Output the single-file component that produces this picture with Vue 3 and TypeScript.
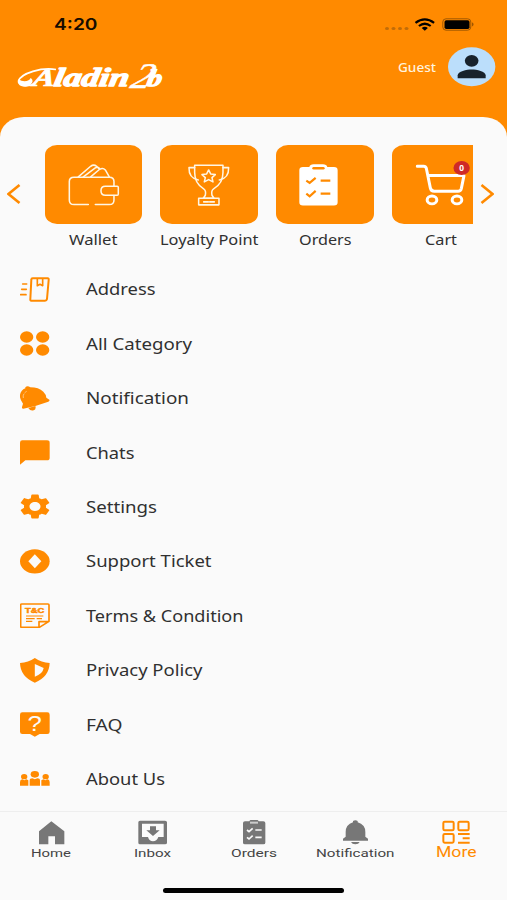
<script setup lang="ts">
import { h } from 'vue'

interface Label { text: string; x: number; w: number }
interface NavItem { text: string; w: number; active?: boolean }

interface StretchProps {
  text: string
  w: number
  size: number
  height: number
  base: number
  family?: string
  weight?: number
}

// Text set to an exact measure, for the wide look of the app's typeface.
const WideText = (p: StretchProps) =>
  h('svg', { width: p.w, height: p.height, style: { display: 'block', overflow: 'visible', flex: 'none' } }, [
    h('text', {
      x: 0, y: p.base, textLength: p.w, lengthAdjust: 'spacingAndGlyphs',
      'font-size': p.size, 'font-weight': p.weight ?? 400,
      'font-family': p.family ?? '"Noto Sans", sans-serif', fill: 'currentColor',
    }, p.text),
  ])
WideText.props = ['text', 'w', 'size', 'height', 'base', 'family', 'weight']

const cards: { text: string; w: number }[] = [
  { text: 'Wallet', w: 48.5 },
  { text: 'Loyalty Point', w: 98.5 },
  { text: 'Orders', w: 52.5 },
  { text: 'Cart', w: 32 },
]

const rows: Label[] = [
  { text: 'Address', x: 0, w: 69.5 },
  { text: 'All Category', x: 0, w: 106 },
  { text: 'Notification', x: -0.5, w: 103 },
  { text: 'Chats', x: 0, w: 48.5 },
  { text: 'Settings', x: 0, w: 71 },
  { text: 'Support Ticket', x: 0, w: 125.5 },
  { text: 'Terms & Condition', x: 0, w: 157.5 },
  { text: 'Privacy Policy', x: -0.5, w: 116.5 },
  { text: 'FAQ', x: -0.5, w: 36.5 },
  { text: 'About Us', x: 0, w: 79 },
]

const nav: NavItem[] = [
  { text: 'Home', w: 40 },
  { text: 'Inbox', w: 37 },
  { text: 'Orders', w: 46 },
  { text: 'Notification', w: 78.5 },
  { text: 'More', w: 40.5, active: true },
]
</script>

<template>
  <div class="app">
    <header class="header">
      <div class="status">
        <WideText text="4:20" :w="43.5" :size="16" :height="20" :base="16.4" family="Inter, sans-serif" :weight="600" />
        <svg class="signals" width="92" height="16" viewBox="0 0 92 16">
          <g fill="#c06c08">
            <ellipse cx="3" cy="12.6" rx="2" ry="1.5" /><ellipse cx="9.5" cy="12.6" rx="2" ry="1.5" />
            <ellipse cx="16" cy="12.6" rx="2" ry="1.5" /><ellipse cx="22.5" cy="12.6" rx="2" ry="1.5" />
          </g>
          <g fill="none" stroke="#000" stroke-width="2.2">
            <path d="M31.500 6.800Q40.800 -.2 50.100 6.800" />
            <path d="M34.900 10Q40.800 5.500 46.700 10" />
          </g>
          <path d="M37.700 11.900Q40.800 9.400 43.900 11.900L40.800 14.700Z" />
          <rect x="58.800" y="2.800" width="28" height="11.400" rx="3.200" fill="none" stroke="#a05800" stroke-width="1" />
          <rect x="60.500" y="4.200" width="25" height="8.800" rx="1.800" />
          <path d="M88.200 6.300q2.600 2.100 0 4.200Z" fill="#8a4b00" />
        </svg>
      </div>
      <div class="brand">
        <svg class="logo" width="150" height="30" viewBox="16 61 150 30" role="img" aria-label="Aladin2b">
          <g fill="#fff" stroke="#fff" stroke-linejoin="round" font-family="'Liberation Serif', serif" font-style="italic" font-weight="700">
            <g transform="translate(0 86) skewX(-10)">
              <text x="32" y="0" font-size="25" stroke-width=".7" textLength="22" lengthAdjust="spacingAndGlyphs">A</text>
              <text x="53" y="0" font-size="26" stroke-width="1.300" textLength="75" lengthAdjust="spacingAndGlyphs">ladin</text>
              <text x="146" y="0" font-size="24" stroke-width="1.200" textLength="15" lengthAdjust="spacingAndGlyphs">b</text>
            </g>
            <g transform="translate(0 87.500) skewX(-22)">
              <text x="129" y="0" font-size="36" font-weight="400" stroke-width=".5" textLength="20" lengthAdjust="spacingAndGlyphs">2</text>
            </g>
          </g>
          <path d="M56 69.500C42 67 21 73 18.500 81C17.500 87.500 31 87 36 82" fill="none" stroke="#fff" stroke-width="1.700" />
          <path d="M18.600 79C23 83 30 81 30.500 78C34 80 33 84 28 86C21 87.500 17.500 84 18.600 79Z" fill="#fff" />
        </svg>
        <div class="user">
          <WideText text="Guest" :w="38" :size="12.4" :height="16" :base="12.600" :weight="500" />
          <svg width="48" height="40" viewBox="0 0 144 120">
            <ellipse cx="71" cy="59" rx="71" ry="58.500" fill="#bbdefb" />
            <ellipse cx="71" cy="41.500" rx="20.500" ry="17.500" fill="#18222b" />
            <path d="M29 94V85C29 73 56 67.500 71 67.500S113 73 113 85V94Z" fill="#18222b" />
          </svg>
        </div>
      </div>
    </header>

    <main class="sheet">
      <section class="carousel">
        <svg class="arrow left" width="14" height="22" viewBox="0 0 14 22"><path d="M12.500 2L1.500 11L12.500 20" /></svg>
        <div class="viewport">
          <div v-for="(c, i) in cards" :key="c.text" class="item">
            <div class="card">
              <svg v-if="i === 0" class="line" viewBox="133 28 292 239" preserveAspectRatio="none">
                <path d="M263 207H220Q206 207 206 193V138Q206 125 220 125H326Q340 125 340 138V152M340 180V193Q340 207 326 207H284" />
                <path d="M314 152H350Q353 152 353 156V175Q353 179 350 179H314Q301 179 301 165.500T314 152Z" />
                <path d="M233 124L270 92Q279 85 288 92L295 99M248 124L284 97Q291 92 296 98M270 124L297 101Q307 95 314 103L326 124" />
              </svg>
              <svg v-else-if="i === 1" class="line" viewBox="481 28 292 239" preserveAspectRatio="none">
                <path d="M585 89H670V111Q670 144 642 160Q634 165 637 179L643 188H611L617 179Q620 165 612 160Q585 144 585 111Z" />
                <path d="M585 96H568Q567 128 596 133M670 96H687Q688 128 659 133M597 188H658V208H597Z" />
                <path d="M627 103L633 115L647 117L637 126L640 139L627 132L614 139L617 126L607 117L621 115Z" />
                <path d="M612 199H644" stroke-dasharray="14 4" />
              </svg>
              <svg v-else-if="i === 2" viewBox="79 28 292 239" preserveAspectRatio="none">
                <path d="M160 94H179Q181 86 192 86H220Q231 86 233 94H253Q264 94 264 104V200Q264 210 253 210H160Q149 210 149 200V104Q149 94 160 94Z" fill="#fff" />
                <rect x="188" y="94" width="37" height="8" rx="4" fill="#ff8a00" />
                <path d="M170 135L180 142L198 127M213 135H242M170 174L180 182L198 166M213 174H242" fill="none" stroke="#ff8a00" stroke-width="6.500" />
              </svg>
              <svg v-else viewBox="427 28 292 239" preserveAspectRatio="none">
                <g fill="none" stroke="#fff" stroke-width="9" stroke-linecap="round" stroke-linejoin="round">
                  <path d="M503 92H522Q528 92 530 98L542 157Q544 167 554 167H625Q633 167 635 159L643 120H536" />
                  <ellipse cx="547" cy="193" rx="14.500" ry="12" /><ellipse cx="622" cy="193" rx="14.500" ry="12" />
                </g>
                <ellipse cx="636" cy="97" rx="24.500" ry="21" fill="#cf2a27" />
                <text x="636" y="106" text-anchor="middle" font-family="'Noto Sans', sans-serif" font-size="25" font-weight="700" fill="#fff">0</text>
              </svg>
            </div>
            <WideText class="cardlabel" :text="c.text" :w="c.w" :size="13.600" :height="18" :base="14" />
          </div>
        </div>
        <svg class="arrow right" width="14" height="22" viewBox="0 0 14 22"><path d="M1.500 2L12.500 11L1.500 20" /></svg>
      </section>

      <ul class="menu">
        <li v-for="(r, i) in rows" :key="r.text">
          <svg v-if="i === 0" class="ico" viewBox="60 35 90 75">
            <g fill="none" stroke="#ff8a00" stroke-width="6" stroke-linejoin="round" stroke-linecap="round">
              <path d="M98 39H143Q147 39 146 44L141 101Q140 106 135 106H94Q90 106 91 101L94 43Q94 39 98 39Z" />
              <path d="M112 41V61L120 57L128 61V41" stroke-width="5" />
              <path d="M68 56H80M65 72H79M62 88H78" stroke-width="5" />
            </g>
          </svg>
          <svg v-else-if="i === 1" class="ico" viewBox="60 198 90 75" fill="#ff8a00">
            <ellipse cx="80" cy="216" rx="20" ry="17.500" /><ellipse cx="128" cy="216" rx="20" ry="17.500" />
            <ellipse cx="80" cy="255" rx="20" ry="17.500" /><ellipse cx="128" cy="255" rx="20" ry="17.500" />
          </svg>
          <svg v-else-if="i === 2" class="ico" viewBox="60 362 90 75" fill="#ff8a00">
            <path d="M76 366Q82 360 91 366Q116 366 130 379Q139 388 139 397L148 403Q150 407 145 409L106 422L70 430Q65 431 66 425L69 415Q58 401 60 388Q63 374 76 369Z" />
            <path d="M85 428L106 422Q109 432 101 435Q91 438 85 428Z" />
            <path d="M70 398Q67 386 80 378" fill="none" stroke="#ffe0b8" stroke-width="2" stroke-dasharray="13 3" />
          </svg>
          <svg v-else-if="i === 3" class="ico" viewBox="60 44 90 75" fill="#ff8a00">
            <path d="M67 45H141Q149 45 149 52V98Q149 105 141 105H76L60 118V52Q60 45 67 45Z" />
          </svg>
          <svg v-else-if="i === 4" class="ico" viewBox="2.200 2 19.600 20" preserveAspectRatio="none" fill="#ff8a00">
            <path d="M19.140 12.940c.040-.300.060-.610.060-.940 0-.320-.020-.640-.070-.940l2.030-1.580c.180-.140.230-.410.120-.610l-1.920-3.320c-.120-.220-.370-.290-.590-.220l-2.390.960c-.500-.380-1.030-.700-1.620-.940l-.360-2.540c-.040-.240-.240-.410-.480-.410h-3.840c-.240 0-.430.170-.470.410l-.360 2.540c-.590.240-1.130.570-1.620.940l-2.390-.960c-.220-.080-.470 0-.590.220L2.740 8.870c-.120.210-.080.470.120.610l2.030 1.580c-.050.300-.090.630-.090.940s.020.640.070.940l-2.030 1.580c-.180.140-.230.410-.120.610l1.920 3.320c.120.220.370.290.590.220l2.390-.960c.500.380 1.030.700 1.620.940l.360 2.540c.050.240.240.410.480.410h3.840c.240 0 .440-.170.470-.410l.360-2.540c.590-.240 1.130-.560 1.620-.940l2.390.960c.220.080.470 0 .590-.220l1.920-3.320c.120-.220.070-.470-.120-.610l-2.010-1.580zM12 15.600c-1.980 0-3.600-1.620-3.600-3.600s1.620-3.600 3.600-3.600 3.600 1.620 3.600 3.600-1.620 3.600-3.600 3.600z" />
          </svg>
          <svg v-else-if="i === 5" class="ico" viewBox="60 371 90 75">
            <ellipse cx="104.500" cy="408" rx="44.500" ry="36.500" fill="#ff8a00" />
            <path d="M104.500 387L124 408L104.500 429L85 408Z" fill="#fafafa" />
          </svg>
          <svg v-else-if="i === 6" class="ico" viewBox="60 53 90 75">
            <path d="M65 56H144Q147 56 147 59V108L118 126H65Q62 126 62 123V59Q62 56 65 56ZM117 125V109H146" fill="none" stroke="#ff8a00" stroke-width="5" stroke-linejoin="round" />
            <text x="75" y="83" font-family="'Liberation Sans', sans-serif" font-weight="700" font-size="23" textLength="58" lengthAdjust="spacingAndGlyphs" fill="#ff8a00" stroke="#ff8a00" stroke-width="1.500">T&amp;C</text>
            <path d="M78 92H130M78 100H104M110 100H126M78 108H97" fill="none" stroke="#ff8a00" stroke-width="3.500" />
          </svg>
          <svg v-else-if="i === 7" class="ico" viewBox="60 218 90 75">
            <path d="M104.500 218Q124 231 149 233Q148 274 104.500 292Q61 274 60 233Q85 231 104.500 218Z" fill="#ff8a00" />
            <path d="M104.500 236L131 248Q128 266 104.500 274Z" fill="#fafafa" />
          </svg>
          <svg v-else-if="i === 8" class="ico" viewBox="60 50 90 75">
            <path d="M67 51H142Q149 51 149 58V109Q149 116 142 116H119L104.500 124L90 116H67Q60 116 60 109V58Q60 51 67 51Z" fill="#ff8a00" />
            <text x="82.500" y="107" font-family="'Liberation Sans', sans-serif" font-size="64" textLength="43" lengthAdjust="spacingAndGlyphs" fill="#fafafa">?</text>
          </svg>
          <svg v-else class="ico" viewBox="60 213 90 75" fill="#ff8a00">
            <ellipse cx="104.500" cy="238" rx="12.500" ry="10" /><ellipse cx="72.500" cy="245" rx="9.500" ry="8" /><ellipse cx="137" cy="245" rx="9.500" ry="8" />
            <path d="M89 272V257Q89 250 97 250L104.500 253L112 250Q120 250 120 257V272Z" />
            <path d="M60 272V261Q60 254 67 253L73 256L79 253L85 256V272ZM124 272V256L130 253L136 256L142 253Q149 254 149 261V272Z" />
          </svg>
          <span class="rowlabel" :style="{ marginLeft: 36 + r.x + 'px' }">
            <WideText :text="r.text" :w="r.w" :size="15.900" :height="20" :base="15.500" />
          </span>
        </li>
      </ul>
    </main>

    <footer class="footer">
      <nav class="tabs">
        <div v-for="(n, i) in nav" :key="n.text" class="tab" :class="{ active: n.active }">
          <svg v-if="i === 0" class="tabico" viewBox="109 58 90 75" fill="#777">
            <path d="M155 62L194 92V131H166V107H146V131H118V92Z" />
          </svg>
          <svg v-else-if="i === 1" class="tabico" viewBox="413 58 90 75">
            <path fill-rule="evenodd" d="M422 60H497Q503 60 503 65V126Q503 131 497 131H422Q417 131 417 126V65Q417 60 422 60ZM428 69V109H446Q450 122 461 122T477 109H493V69Z" fill="#777" />
            <path d="M452 77H470V89H481L461 106L441 89H452Z" fill="#777" />
          </svg>
          <svg v-else-if="i === 2" class="tabico" viewBox="717 58 90 75">
            <path d="M735 62H748Q750 57 756 57H768Q774 57 776 62H790Q796 62 796 67V126Q796 131 790 131H735Q729 131 729 126V67Q729 62 735 62Z" fill="#777" />
            <path d="M750 63H774V69H750Z" fill="#ccc" />
            <path d="M741 88L747 93L758 83M766 88H785M741 110L747 115L758 105M766 110H785" fill="none" stroke="#fafafa" stroke-width="5" />
          </svg>
          <svg v-else-if="i === 3" class="tabico" viewBox="270 58 90 75" fill="#777">
            <path d="M309 65V61Q316 57 323 61V65Q346 72 346 94V108L354 114V120H279V114L287 108V94Q287 72 309 65ZM303 124H329Q326 131 316 131T303 124Z" />
          </svg>
          <svg v-else class="tabico" viewBox="574 58 90 75" fill="none" stroke="#ff8a00" stroke-width="6">
            <rect x="581" y="63" width="31" height="26" rx="4" /><rect x="626" y="63" width="31" height="26" rx="4" />
            <rect x="581" y="100" width="31" height="26" rx="4" />
            <path d="M625 100H660M639 113H660M625 126H660" />
          </svg>
          <WideText :text="n.text" :w="n.w" :size="n.active ? 14 : 11.700" :height="14" :base="n.active ? 11.700 : 12.200" family="Roboto, sans-serif" />
        </div>
      </nav>
      <div class="homebar"></div>
    </footer>
  </div>
</template>

<style>
body { margin: 0; background: #fafafa; }
</style>

<style scoped>
.app { width: 507px; height: 900px; overflow: hidden; background: #ff8a00; display: flex; flex-direction: column; font-family: "Noto Sans", sans-serif; }
.header { height: 117px; flex: none; box-sizing: border-box; padding-top: 14px; }
.status { display: flex; justify-content: space-between; height: 20px; padding: 0 31px 0 53.500px; color: #160c00; }
.signals { margin-top: 1.500px; }
.brand { display: flex; justify-content: space-between; padding: 12.500px 11.500px 0 16px; }
.logo { margin-top: 14.500px; overflow: visible; }
.user { display: flex; align-items: center; gap: 12px; height: 40px; color: #fff3df; }
.sheet { flex: 1; background: #fafafa; border-radius: 24px 24px 0 0 / 20px 20px 0 0; color: #303030; }
.carousel { display: flex; padding-top: 27.500px; }
.arrow { flex: none; margin-top: 38.500px; fill: none; stroke: #ff8a00; stroke-width: 2.600; }
.left { margin-left: 7px; margin-right: 23.500px; }
.right { margin-left: 7px; }
.viewport { width: 428.500px; height: 108px; flex: none; display: flex; gap: 18.700px; overflow: hidden; }
.item { width: 97.300px; flex: none; display: flex; flex-direction: column; align-items: center; }
.card { width: 97.300px; height: 79.500px; border-radius: 12px / 10px; background: #ff8a00; overflow: hidden; }
.card svg { display: block; width: 100%; height: 100%; }
.line { fill: none; stroke: #fff6e5; stroke-width: 4.600; stroke-linejoin: round; stroke-linecap: round; }
.cardlabel { margin-top: 6.500px; }
.menu { list-style: none; margin: 9.700px 0 0; padding: 0 0 0 20px; }
.menu li { display: flex; align-items: center; height: 54.400px; }
.ico { width: 30px; height: 25px; flex: none; }
.footer { height: 89px; flex: none; box-sizing: border-box; background: #fafafa; border-top: 1px solid #eee; }
.tabs { display: flex; height: 75.500px; padding-top: 7.500px; box-sizing: border-box; color: #444; }
.tab { flex: 1; display: flex; flex-direction: column; align-items: center; }
.tabico { width: 30px; height: 25px; flex: none; }
.active { color: #ff8a00; }
.homebar { width: 181px; height: 5px; border-radius: 3px; background: #000; margin: 0 auto; }
</style>
